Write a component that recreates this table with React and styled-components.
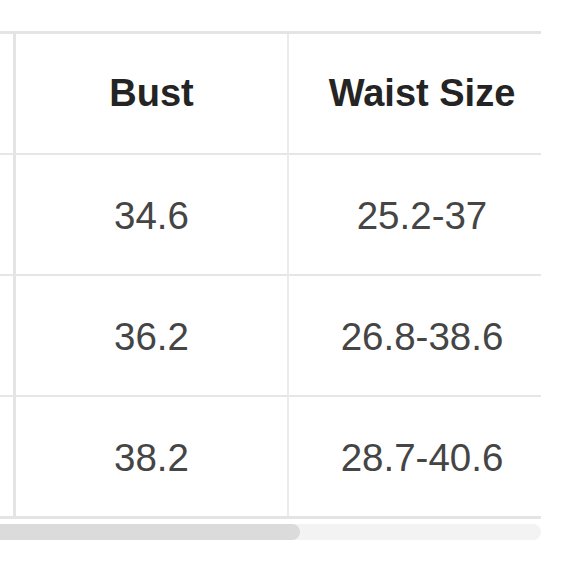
import React from 'react';
import styled, { createGlobalStyle } from 'styled-components';

const GlobalStyle = createGlobalStyle`
  html, body {
    margin: 0;
    padding: 0;
    background: #fff;
    font-family: "Liberation Sans", Arial, sans-serif;
  }
`;

const Page = styled.div`
  width: 580px;
  height: 580px;
  padding-top: 31px;
  box-sizing: border-box;
  background: #fff;
`;

const Viewport = styled.div`
  width: 541px;
  overflow: hidden;
`;

const Table = styled.div`
  display: grid;
  grid-template-columns: 16px 273px 266px;
  width: 555px;
  border-top: 3px solid #e4e4e4;
  border-bottom: 3px solid #e4e4e4;
`;

const Cell = styled.div`
  display: flex;
  align-items: center;
  justify-content: center;
  box-sizing: border-box;
  height: ${p => (p.$first ? '119px' : '121px')};
  padding-top: ${p => (p.$first ? '0' : '2px')};
  font-size: ${p => (p.$head ? '38px' : '38.5px')};
  font-weight: ${p => (p.$head ? 700 : 400)};
  color: ${p => (p.$head ? '#242424' : '#454545')};
  border-top: ${p => (p.$first ? 'none' : '2px solid #e6e6e6')};
  border-right: ${p => p.$divider || 'none'};
  white-space: nowrap;
`;

const ScrollTrack = styled.div`
  margin-top: 5px;
  width: 541px;
  height: 16px;
  background: #f3f3f3;
  border-radius: 0 8px 8px 0;
`;

const ScrollThumb = styled.div`
  height: 100%;
  background: #dbdbdb;
  border-radius: 0 8px 8px 0;
`;

const rows = [
  { bust: 'Bust', waist: 'Waist Size', head: true },
  { bust: '34.6', waist: '25.2-37' },
  { bust: '36.2', waist: '26.8-38.6' },
  { bust: '38.2', waist: '28.7-40.6' },
];

export default function App() {
  return (
    <>
      <GlobalStyle />
      <Page>
        <Viewport>
          <Table>
            {rows.map((r, i) => (
              <React.Fragment key={i}>
                <Cell $first={i === 0} $divider="3px solid #e4e4e4" />
                <Cell $first={i === 0} $head={r.head} $divider="2px solid #ebebeb">
                  {r.bust}
                </Cell>
                <Cell $first={i === 0} $head={r.head}>
                  {r.waist}
                </Cell>
              </React.Fragment>
            ))}
          </Table>
        </Viewport>
        <ScrollTrack>
          <ScrollThumb style={{ width: '300px' }} />
        </ScrollTrack>
      </Page>
    </>
  );
}
